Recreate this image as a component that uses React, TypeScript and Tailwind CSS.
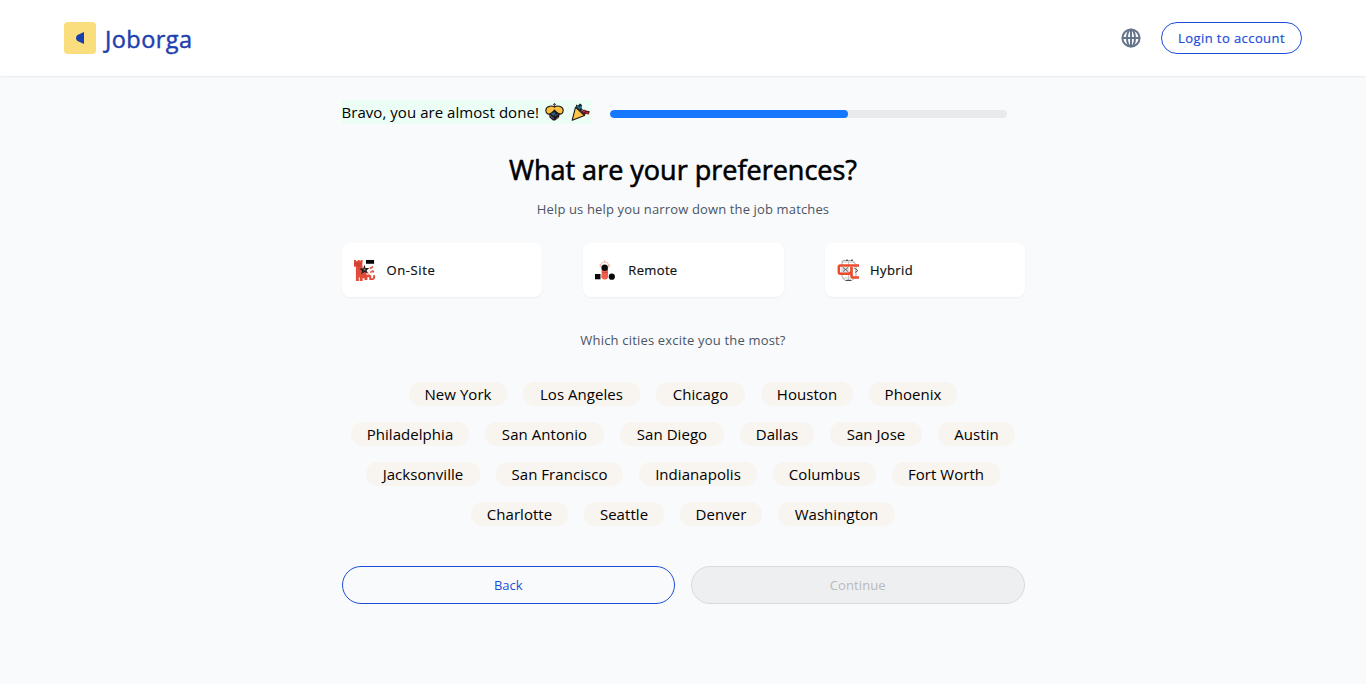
import React from 'react';

type City = { name: string; width: string };

const cityRows: City[][] = [
  [
    { name: 'New York', width: 'w-[98px]' },
    { name: 'Los Angeles', width: 'w-[117px]' },
    { name: 'Chicago', width: 'w-[89px]' },
    { name: 'Houston', width: 'w-[92px]' },
    { name: 'Phoenix', width: 'w-[88px]' },
  ],
  [
    { name: 'Philadelphia', width: 'w-[118px]' },
    { name: 'San Antonio', width: 'w-[119px]' },
    { name: 'San Diego', width: 'w-[104px]' },
    { name: 'Dallas', width: 'w-[74px]' },
    { name: 'San Jose', width: 'w-[92px]' },
    { name: 'Austin', width: 'w-[77px]' },
  ],
  [
    { name: 'Jacksonville', width: 'w-[114px]' },
    { name: 'San Francisco', width: 'w-[127px]' },
    { name: 'Indianapolis', width: 'w-[118px]' },
    { name: 'Columbus', width: 'w-[103px]' },
    { name: 'Fort Worth', width: 'w-[108px]' },
  ],
  [
    { name: 'Charlotte', width: 'w-[97px]' },
    { name: 'Seattle', width: 'w-[80px]' },
    { name: 'Denver', width: 'w-[82px]' },
    { name: 'Washington', width: 'w-[117px]' },
  ],
];

function Globe() {
  return (
    <svg className="size-5" viewBox="0 0 20 20" fill="none" stroke="#64748b" strokeWidth="2">
      <circle cx="10" cy="10" r="8.6" />
      <ellipse cx="10" cy="10" rx="4" ry="8.6" />
      <path d="M1.4 10h17.2M10 1.4v17.2" />
    </svg>
  );
}

function ClappingIcon() {
  return (
    <svg className="h-[18px] w-[19px]" viewBox="0 0 19 18">
      <path d="M9.5 0v4M8 1.5h3" stroke="#555" strokeWidth="1.2" />
      <path d="M9.5 4C6 1.8.8 3.6.8 7.4c0 3 2.9 4.6 5.7 3.2L9.5 7l3 3.6c2.8 1.4 5.7-.2 5.7-3.2 0-3.8-5.2-5.6-8.7-3.4Z" fill="#fdbf3d" stroke="#181818" strokeWidth="1.1" />
      <path d="m9.5 7 2.5 2 2.8 1.5-.8 4-4 3H8l-3.5-3-.5-3.5 3-2Z" fill="#17191d" />
      <path d="m6 10.5 3.5-1.5 1.5 2-3 2Z" fill="#28607a" />
      <path d="m10 13 3-2M6 14l3 1.5" stroke="#5d3675" strokeWidth="1.5" />
      <path d="m4.5 12 2 1.5M11.5 15.5l2-1" stroke="#9a7630" />
    </svg>
  );
}

function PartyIcon() {
  return (
    <svg className="h-[18px] w-[19px]" viewBox="0 0 19 18">
      <path d="m4.5 4.2 9 8.3L1.2 17.3Z" fill="#ffc44b" stroke="#181818" strokeWidth="1.1" strokeLinejoin="round" />
      <path d="m5 1.5 2 1 2-2 2 1.5-.5 3L12 7l-3 1.5L5 5Z" fill="#17252d" />
      <path d="m6 3 2 2M8.5 6 10 3" stroke="#28739a" strokeWidth="1.5" />
      <path d="m10 8.5 3-2 2 1 3.8.8-1 3.2-2.8-.5-2 1.5-3-3Z" fill="#4f1820" />
      <path d="m12 9 2-1M14.5 10h3" stroke="#c32c38" strokeWidth="1.4" />
    </svg>
  );
}

function OnSiteIcon() {
  return (
    <svg className="size-[22px]" viewBox="0 -1 23 23">
      <path d="M0 0h2v1h2V0h2v1h1V0h2v6l3 1 6-1v2l-3 3 3 1v4h4v3l-2 2h-4v-3h-2v3h-3v-2H9v3H6v-4H5v4H2V7H0Z" fill="#e14b39" />
      <path d="M0 4h8M3 6h4" stroke="#b73b2d" />
      <path d="M9 3h12v2l-6 4 4-1-4 5v3l-2-1V9H9Z" fill="#fff" />
      <path d="M12.5 0H21v4h-8.5Z" fill="#080808" />
      <path d="m11 5 1 3.5h4L13 11l2 3.5-4-1.8L7.5 15l1-3.5-3-2.5h4Z" fill="#252020" />
      <path d="M10 9h2v2h-2Z" fill="#777" />
      <path d="M16 10v4l3 2v3" fill="none" stroke="#fff" strokeWidth="2" />
      <path d="m17 8 3-2v2l-3 2ZM18 11h3v2h-3Z" fill="#e14b39" />
    </svg>
  );
}

function RemoteIcon() {
  return (
    <svg className="size-[22px]" viewBox="0 0 22 22">
      <circle cx="9.7" cy="6.7" r="4" fill="none" stroke="#f4b2aa" strokeWidth="0.9" />
      <path d="M9.7 1v3M5.2 5v3M14.2 5v3" stroke="#eda096" strokeWidth="0.7" />
      <rect x="6.6" y="8" width="6.4" height="12.5" rx="3" fill="#f15d4e" />
      <path d="M7 13h5.7v1H7Z" fill="#cf4b3c" />
      <circle cx="9.7" cy="8.7" r="3.2" fill="#090909" />
      <path d="M0 15h5.5v5.3H0Z" fill="#090909" />
      <path d="M5.6 16h1v3h-1Z" fill="#999" />
      <circle cx="16.8" cy="17.7" r="3.1" fill="#090909" />
    </svg>
  );
}

function HybridIcon() {
  return (
    <svg className="size-[22px]" viewBox="0 0 22 22" fill="none">
      <path d="M6 1.5h9l4 4v12l-4 4H8l-3-4v-13Z" stroke="#999" strokeWidth="0.9" />
      <path d="M11.5 1v20.5M4 3h14M5 19h13" stroke="#bbb" strokeWidth="0.8" />
      <path d="M4 8h8v6H4Z" fill="#ddd" />
      <path d="M22 6.5H3.2Q1.8 6.5 1.8 8v5q0 1.7 1.5 1.7H13" stroke="#ed4c2c" strokeWidth="2.5" />
      <path d="M14.5 8v8.5q0 2 2 2H22M14.5 14h-3" stroke="#ed4c2c" strokeWidth="2.7" />
      <path d="m6 8.5 5 4m0-4-5 4M17 9l4 2.5-3 2" stroke="#555" strokeWidth="0.9" />
      <path d="M9 1.2h2M14 1.2h2M9 21.3h5" stroke="#333" />
    </svg>
  );
}

function Preference({ label, icon, tracking }: { label: string; icon: React.ReactNode; tracking: string }) {
  return (
    <button className="flex h-[54px] w-[200.4px] items-center rounded-lg bg-white pl-3 shadow-[0_1px_2px_rgba(0,0,0,0.05)]">
      {icon}
      <span className={`ml-[11px] pt-0.5 text-[13px] text-[#111] [-webkit-text-stroke:0.2px] ${tracking}`}>{label}</span>
    </button>
  );
}

export default function App() {
  return (
    <div className="min-h-[684px] bg-[#f9fafc] font-['Open_Sans',sans-serif] text-black">
      <header className="flex h-[76px] items-center justify-between bg-white px-16 shadow-[0_1px_2px_rgba(0,0,0,0.07)]">
        <div className="flex items-center gap-2">
          <div className="flex size-8 items-center justify-center rounded bg-[#fadd7d]">
            <svg className="h-3 w-2" viewBox="0 0 8 12"><path d="M8 0v12L1.5 9Q0 8 0 6t1.5-3Z" fill="#173fae" /></svg>
          </div>
          <span className="pt-1 pl-px text-[23.5px] tracking-[0.45px] text-[#1e40af] [-webkit-text-stroke:0.45px]">Joborga</span>
        </div>
        <div className="flex items-center gap-5">
          <Globe />
          <button className="h-8 w-[141px] rounded-full border border-[#1d4ed8] pt-0.5 text-[13px] tracking-[0.42px] whitespace-nowrap text-[#1d4ed8] [-webkit-text-stroke:0.2px]">Login to account</button>
        </div>
      </header>

      <main className="mx-auto w-[683px]">
        <div className="flex h-[72px] items-center">
          <div className="flex h-6 w-[250px] items-center bg-[#ecfdf5]">
            <span className="w-[203px] text-[15px] tracking-[0.05px] whitespace-nowrap">Bravo, you are almost done!</span>
            <ClappingIcon />
            <span className="ml-[7px] flex"><PartyIcon /></span>
          </div>
          <div className="ml-[18px] mt-1 h-2 w-[397px] overflow-hidden rounded-full bg-[#e9eaec]">
            <div className="h-full w-[238px] rounded-full bg-[#1677ff]" />
          </div>
        </div>

        <h1 className="mt-1 text-center text-[27px] leading-9 [-webkit-text-stroke:0.6px]">What are your preferences?</h1>
        <p className="mt-[11px] text-center text-[13px] leading-5 tracking-[0.14px] text-[#4b5563]">Help us help you narrow down the job matches</p>

        <div className="-mr-px mt-6 flex justify-between">
          <Preference label="On-Site" icon={<OnSiteIcon />} tracking="tracking-[0.6px]" />
          <Preference label="Remote" icon={<RemoteIcon />} tracking="tracking-[0.35px]" />
          <Preference label="Hybrid" icon={<HybridIcon />} tracking="tracking-[0.4px]" />
        </div>

        <p className="mt-[33px] text-center text-[13px] leading-5 tracking-[0.18px] text-[#4b5563]">Which cities excite you the most?</p>

        <div className="mt-8 flex flex-col gap-4">
          {cityRows.map((row) => (
            <div key={row[0].name} className="flex justify-center gap-4">
              {row.map((city) => (
                <button key={city.name} className={`h-6 rounded-full bg-[#f8f4ef] text-[15px] leading-6 tracking-[0.05px] whitespace-nowrap ${city.width}`}>
                  {city.name}
                </button>
              ))}
            </div>
          ))}
        </div>

        <div className="mt-10 grid grid-cols-2 gap-4">
          <button className="h-[38px] rounded-full border border-[#1d4ed8] pt-0.5 text-[13px] text-[#1d4ed8]">Back</button>
          <button disabled className="h-[38px] rounded-full border border-[#d9dadc] bg-[#eeeff1] pt-0.5 text-[13px] tracking-[0.1px] text-[#b8babd]">Continue</button>
        </div>
      </main>
    </div>
  );
}
